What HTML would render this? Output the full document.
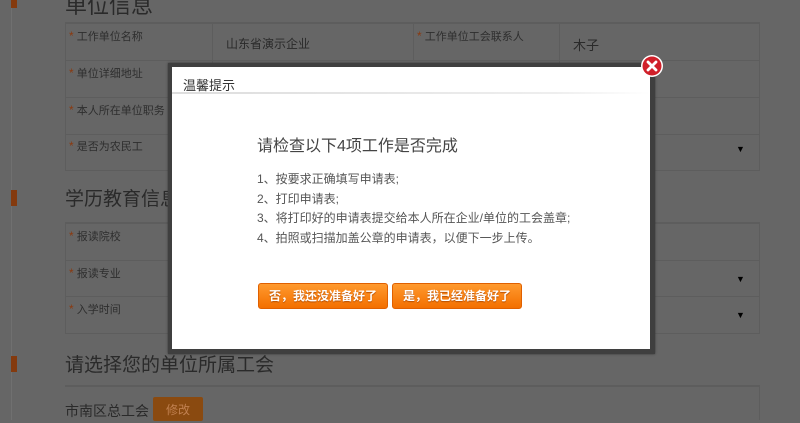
<!DOCTYPE html>
<html><head><meta charset="utf-8"><style>
body{margin:0;width:800px;height:420px;overflow:hidden;background:#666;font-family:"Liberation Sans","Noto Sans CJK SC",sans-serif;position:relative}
.a{position:absolute}
.t{color:#2a2a2a}
.lbl{font-size:11px;color:#2e2e2e}
.star{color:#8a3a10;font-size:12px}
.hl{background:#5d5d5d}
.vl{background:#5d5d5d;width:1px}
.bar{background:#843a0e;width:6px;left:11px}
.btn{position:absolute;height:24px;border-radius:3px;background:linear-gradient(#ff9a2e,#f36f00);border:1px solid #e06000;color:#fff;font-size:12px;font-weight:bold;text-align:center;line-height:24px;text-shadow:0 1px 1px #b44d00}
</style></head><body>
<div class="a" style="left:11px;top:0;width:1px;height:420px;background:#707070"></div>
<div class="a bar" style="top:0;height:8px"></div>
<div class="a bar" style="top:190px;height:16px"></div>
<div class="a bar" style="top:356px;height:16px"></div>
<div class="a t" style="left:65px;top:-12px;font-size:22px">单位信息</div>
<div class="a hl" style="left:65px;top:22px;width:695px;height:2px"></div>
<div class="a hl" style="left:65px;top:60px;width:695px;height:1px"></div>
<div class="a hl" style="left:65px;top:97px;width:695px;height:1px"></div>
<div class="a hl" style="left:65px;top:134px;width:695px;height:1px"></div>
<div class="a hl" style="left:65px;top:170px;width:695px;height:1px"></div>
<div class="a vl" style="left:65px;top:22px;height:148px"></div>
<div class="a vl" style="left:212px;top:22px;height:148px"></div>
<div class="a vl" style="left:413px;top:22px;height:38px"></div>
<div class="a vl" style="left:559px;top:22px;height:112px"></div>
<div class="a vl" style="left:759px;top:22px;height:148px"></div>
<div class="a lbl" style="left:69px;top:28px"><span class="star">*</span> 工作单位名称</div>
<div class="a lbl" style="left:69px;top:65px"><span class="star">*</span> 单位详细地址</div>
<div class="a lbl" style="left:69px;top:102px"><span class="star">*</span> 本人所在单位职务</div>
<div class="a lbl" style="left:69px;top:138px"><span class="star">*</span> 是否为农民工</div>
<div class="a t" style="left:226px;top:35px;font-size:12px">山东省演示企业</div>
<div class="a lbl" style="left:417px;top:28px"><span class="star">*</span> 工作单位工会联系人</div>
<div class="a t" style="left:573px;top:35px;font-size:13px">木子</div>
<div class="a" style="left:736px;top:144px;font-size:9px;color:#000">▼</div>
<div class="a t" style="left:65px;top:184px;font-size:19px">学历教育信息</div>
<div class="a hl" style="left:65px;top:222px;width:695px;height:2px"></div>
<div class="a hl" style="left:65px;top:260px;width:695px;height:1px"></div>
<div class="a hl" style="left:65px;top:296px;width:695px;height:1px"></div>
<div class="a hl" style="left:65px;top:333px;width:695px;height:1px"></div>
<div class="a vl" style="left:65px;top:222px;height:111px"></div>
<div class="a vl" style="left:759px;top:222px;height:111px"></div>
<div class="a lbl" style="left:69px;top:228px"><span class="star">*</span> 报读院校</div>
<div class="a lbl" style="left:69px;top:265px"><span class="star">*</span> 报读专业</div>
<div class="a lbl" style="left:69px;top:301px"><span class="star">*</span> 入学时间</div>
<div class="a" style="left:736px;top:274px;font-size:9px;color:#000">▼</div>
<div class="a" style="left:736px;top:310px;font-size:9px;color:#000">▼</div>
<div class="a t" style="left:65px;top:350px;font-size:19px">请选择您的单位所属工会</div>
<div class="a hl" style="left:65px;top:385px;width:695px;height:2px"></div>
<div class="a vl" style="left:759px;top:385px;height:35px"></div>
<div class="a t" style="left:65px;top:401px;font-size:14px">市南区总工会</div>
<div class="a" style="left:153px;top:397px;width:50px;height:24px;background:#8a4a10;border-radius:2px;color:#c08050;font-size:12px;text-align:center;line-height:26px">修改</div>
<div class="a" style="left:168px;top:63px;width:487px;height:291px;background:#3f3f3f;box-shadow:0 0 2px #333"></div>
<div class="a" style="left:172px;top:67px;width:478px;height:282px;background:#fff">
 <div class="a" style="left:11px;top:8px;font-size:13px;color:#333">温馨提示</div>
 <div class="a" style="left:0;top:25px;width:478px;height:2px;background:linear-gradient(90deg,#ddd,#eee 80%,#fff)"></div>
 <div class="a" style="left:85px;top:65px;font-size:16px;color:#444">请检查以下4项工作是否完成</div>
 <div class="a" style="left:85px;top:103px;font-size:12px;color:#555;line-height:19.5px">1、按要求正确填写申请表;<br>2、打印申请表;<br>3、将打印好的申请表提交给本人所在企业/单位的工会盖章;<br>4、拍照或扫描加盖公章的申请表，以便下一步上传。</div>
 <div class="btn" style="left:86px;top:216px;width:128px">否，我还没准备好了</div>
 <div class="btn" style="left:220px;top:216px;width:128px">是，我已经准备好了</div>
</div>
<svg class="a" style="left:640px;top:54px" width="24" height="24" viewBox="0 0 24 24">
<circle cx="12" cy="12" r="11" fill="#fff"/><circle cx="12" cy="12" r="9.5" fill="#d0202a"/>
<path d="M8 8L16 16M16 8L8 16" stroke="#fff" stroke-width="2.8" stroke-linecap="round"/></svg>
</body></html>
